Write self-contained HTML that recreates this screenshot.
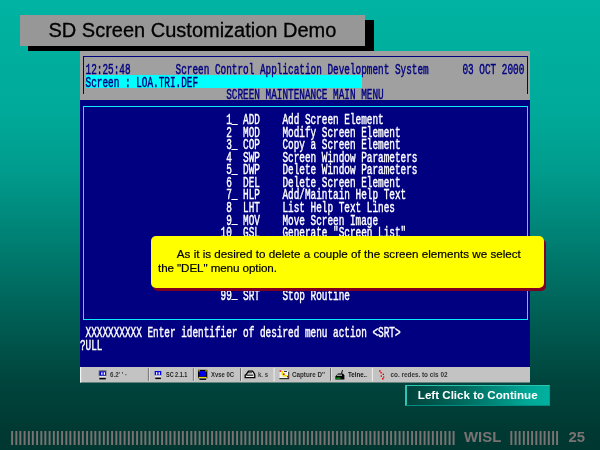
<!DOCTYPE html>
<html lang="en"><head><meta charset="utf-8"><title>SD Screen Customization Demo</title>
<style>
html,body{margin:0;padding:0}
html{width:600px;height:450px;overflow:hidden}
body{width:600px;height:450px;overflow:hidden;position:relative;background:linear-gradient(180deg,#00b3a2 0.00%,#00aa9a 24.44%,#009c8d 37.78%,#008679 50.00%,#006e63 62.22%,#00554c 75.56%,#00453d 84.44%,#003932 95.56%,#003831 100.00%);font-family:"Liberation Sans",Arial,sans-serif}
div{position:absolute;box-sizing:border-box}
#ttl,#co,#btn,#ft,#tbs,#scr{will-change:transform}
#tsh{left:28px;top:20px;width:346px;height:31px;background:#000}
#ttl{left:20px;top:15px;width:345px;height:31px;background:#979797;color:#000;font-size:20px;line-height:31px;white-space:pre;padding-left:28.5px;-webkit-text-stroke:0.3px #000}
#scr{left:80px;top:51px;width:450px;height:316px;background:#000080;overflow:hidden}
#hdr{left:0;top:0;width:450px;height:48.6px;background:#a0a0a0}
#hb{left:3px;top:5px;width:445px;height:38px;border:1px solid #000080;border-bottom:none}
#cy{left:5.6px;top:24px;width:276.2px;height:12.8px;background:#00ffff}
#box{left:3px;top:55px;width:445px;height:214px;border:1px solid #0cecfc}
.r{left:80px;height:12.54px;line-height:12.54px;font-family:"Liberation Mono","DejaVu Sans Mono",monospace;font-size:14.0px;white-space:pre;color:#fff;transform:scaleX(0.6695);transform-origin:0 0;font-weight:normal;-webkit-text-stroke:0.45px}
.r.h{color:#000080}
.u{position:relative;top:-1.4px}
#term{left:-80px;top:-51px;width:600px;height:450px}
#co-sh{left:153px;top:239px;width:393px;height:52px;border-radius:5px;background:#800020}
#co{left:151px;top:236px;width:393px;height:51.6px;border-radius:5px;background:#ffff00;color:#000;font-size:11.67px;line-height:14.4px;padding:10.5px 0 0 7px;white-space:pre;-webkit-text-stroke:0.2px #000}
#btn{left:405px;top:385px;width:145px;height:20.6px;background:linear-gradient(90deg,#00423a 0%,#006a5e 40%,#00a896 85%,#00b09e 100%);border:1.6px solid #2cc4b4;border-left-width:2px;border-right:1px solid #009c8c;border-bottom:1px solid #008c7e;color:#fff;font-weight:bold;font-size:11.6px;line-height:18.4px;white-space:pre;padding-left:10.8px}
#ft{left:9.9px;top:426.5px;height:20px;line-height:20px;font-size:14.9px;font-weight:bold;color:#7a7373;white-space:pre}
</style></head><body>
<div id="tsh"></div>
<div id="ttl">SD Screen Customization Demo</div>
<div id="scr">
<div id="hdr"></div><div id="hb"></div><div id="cy"></div><div id="box"></div>
<div id="term">
<div class="r h" style="top:64.04px"> 12:25:48        Screen Control Application Development System      03 OCT 2000</div>
<div class="r h" style="top:76.58px"> Screen : LOA.TRI.DEF</div>
<div class="r h" style="top:89.12px">                          SCREEN MAINTENANCE MAIN MENU</div>
<div class="r" style="top:114.20px">                          1<span class="u">_</span> ADD    Add Screen Element</div>
<div class="r" style="top:126.74px">                          2  MOD    Modify Screen Element</div>
<div class="r" style="top:139.28px">                          3<span class="u">_</span> COP    Copy a Screen Element</div>
<div class="r" style="top:151.82px">                          4  SWP    Screen Window Parameters</div>
<div class="r" style="top:164.36px">                          5<span class="u">_</span> DWP    Delete Window Parameters</div>
<div class="r" style="top:176.90px">                          6  DEL    Delete Screen Element</div>
<div class="r" style="top:189.44px">                          7<span class="u">_</span> HLP    Add/Maintain Help Text</div>
<div class="r" style="top:201.98px">                          8  LHT    List Help Text Lines</div>
<div class="r" style="top:214.52px">                          9<span class="u">_</span> MOV    Move Screen Image</div>
<div class="r" style="top:227.06px">                         10  GSL    Generate &quot;Screen List&quot;</div>
<div class="r" style="top:289.76px">                         99<span class="u">_</span> SRT    Stop Routine</div>
<div class="r" style="top:327.38px"> XXXXXXXXXX Enter identifier of desired menu action &lt;SRT&gt;</div>
<div class="r" style="top:339.92px">?ULL</div>
</div>
</div>
<svg id="tbs" width="450" height="15.5" viewBox="80 367 450 15.5" style="position:absolute;left:80px;top:367px;overflow:hidden">
<rect x="80" y="367" width="450" height="15.5" fill="#c3c3c3"/>
<rect x="80" y="367" width="1.2" height="15.5" fill="#f4f4f4"/>
<g fill="#6a6a6a"><rect x="147.9" y="368.2" width="1" height="12.6"/><rect x="192.9" y="368.2" width="1" height="12.6"/><rect x="240" y="368.2" width="1" height="12.6"/><rect x="330" y="368.2" width="1" height="12.6"/></g>
<g fill="#f0f0f0"><rect x="148.9" y="368.2" width="0.6" height="13"/><rect x="193.9" y="368.2" width="0.6" height="13"/><rect x="241" y="368.2" width="0.6" height="13"/><rect x="331" y="368.2" width="0.6" height="13"/><rect x="273.6" y="368" width="1" height="13.4"/><rect x="371.9" y="368" width="1" height="13.4"/></g>
<!-- icon 1 -->
<rect x="98.7" y="370.2" width="7.8" height="5.9" fill="#707070"/><rect x="99.5" y="371.4" width="6.3" height="4.1" fill="#0000e6"/><rect x="101.2" y="372.3" width="1.3" height="2.5" fill="#fff"/><rect x="103.7" y="372.3" width="1.3" height="2.5" fill="#fff"/><rect x="99.6" y="376.1" width="6.2" height="1.4" fill="#ececec"/><rect x="99.3" y="377.8" width="6.5" height="1.6" fill="#000"/>
<!-- icon 2 -->
<rect x="154.7" y="371" width="6.6" height="4.3" fill="#0000e6"/><rect x="156" y="372.2" width="1.3" height="2.5" fill="#fff"/><rect x="158.6" y="372.2" width="1.3" height="2.5" fill="#fff"/><rect x="155" y="375.6" width="6" height="1.4" fill="#ececec"/><rect x="155.3" y="377.6" width="5.6" height="1.5" fill="#000"/>
<!-- icon 3 -->
<rect x="198" y="369.8" width="9.3" height="8.4" fill="#000"/><rect x="199.2" y="371" width="6.9" height="5.6" fill="#0000e6"/><rect x="198.4" y="370.2" width="1.4" height="1.2" fill="#f0e000"/><rect x="205.4" y="370.2" width="1.4" height="1.2" fill="#f0e000"/><rect x="198.6" y="376.9" width="8" height="1.1" fill="#f0e000"/><rect x="199.5" y="378.6" width="6.6" height="1.3" fill="#000"/>
<!-- icon 4 printer -->
<path d="M246.5 374.2 L248.5 371.2 L252.5 371.2 L254 373 L254.8 375 L254.8 377.6 L245.2 377.6 L245.2 375 Z" fill="#f4f4f4" stroke="#000" stroke-width="1.3"/><rect x="246.3" y="374.6" width="7" height="1.1" fill="#000"/><rect x="247.5" y="372.4" width="4.5" height="0.8" fill="#000"/>
<!-- icon 5 capture -->
<rect x="279.6" y="370.6" width="8.8" height="8" fill="#f4f4f4"/><rect x="279.4" y="378" width="9.6" height="1.2" fill="#303030"/><rect x="288.2" y="371.8" width="1" height="7" fill="#303030"/><rect x="281.6" y="371" width="1.4" height="4" fill="#f0e000"/><rect x="282.6" y="375" width="5" height="1.6" fill="#f0e000"/><rect x="279.6" y="370.4" width="1.6" height="1.4" fill="#e00000"/><rect x="283" y="373.4" width="1.6" height="1.6" fill="#e00000"/><rect x="287" y="376" width="1.4" height="1.4" fill="#e00000"/><rect x="284" y="371" width="3" height="1" fill="#404040"/>
<!-- icon 6 telnet -->
<path d="M335.4 376.6 L338 373.6 L343 373.6 L344.4 375.6 L344.4 379.4 L335.4 379.4 Z" fill="#000"/><path d="M341.4 373.6 L342.6 370.2" stroke="#000" stroke-width="1" fill="none"/><rect x="337" y="374.6" width="5" height="1.2" fill="#c8c8c8"/><rect x="336.2" y="377.6" width="4.4" height="1.1" fill="#00d000"/>
<!-- icon 7 red dots -->
<g fill="#e80000"><rect x="379.2" y="370.2" width="1.4" height="1.6"/><rect x="380.4" y="372" width="1.4" height="1.4"/><rect x="382.6" y="373.6" width="1.4" height="1.4"/><rect x="380.6" y="375.4" width="1.4" height="1.4"/><rect x="383" y="376.4" width="1.3" height="1.3"/><rect x="382" y="378" width="1.6" height="1.5"/></g>
<g font-family="Liberation Sans, Arial, sans-serif" font-size="6.4" fill="#000" font-weight="bold">
<text x="110" y="376.6" textLength="17" lengthAdjust="spacingAndGlyphs" opacity="0.75">6.2' ' ·</text>
<text x="166" y="376.7" textLength="21.3" lengthAdjust="spacingAndGlyphs" opacity="0.85">SC 2.1.1</text>
<text x="211" y="376.7" textLength="23" lengthAdjust="spacingAndGlyphs" opacity="0.8">Xvse 0C</text>
<text x="258" y="376.7" textLength="10" lengthAdjust="spacingAndGlyphs" opacity="0.7">k. s</text>
<text x="292" y="376.7" textLength="33" lengthAdjust="spacingAndGlyphs" opacity="0.8">Capture D''</text>
<text x="348" y="376.7" textLength="19" lengthAdjust="spacingAndGlyphs" opacity="0.9">Telne..</text>
<text x="390.5" y="376.7" textLength="57" lengthAdjust="spacingAndGlyphs" opacity="0.75">co. redes. to cis 02</text>
</g>
</svg>
<div id="co-sh"></div>
<div id="co">      As it is desired to delete a couple of the screen elements we select
<span style="letter-spacing:-0.1px">the &quot;DEL&quot; menu option.</span></div>
<div id="btn">Left Click to Continue</div>
<div id="ft">|||||||||||||||||||||||||||||||||||||||||||||||||||||||||||||||||||||||||||||||||||||||||||||||||||||||||||  WISL  ||||||||||||  <span style="margin-left:1px">25</span></div>
</body></html>
